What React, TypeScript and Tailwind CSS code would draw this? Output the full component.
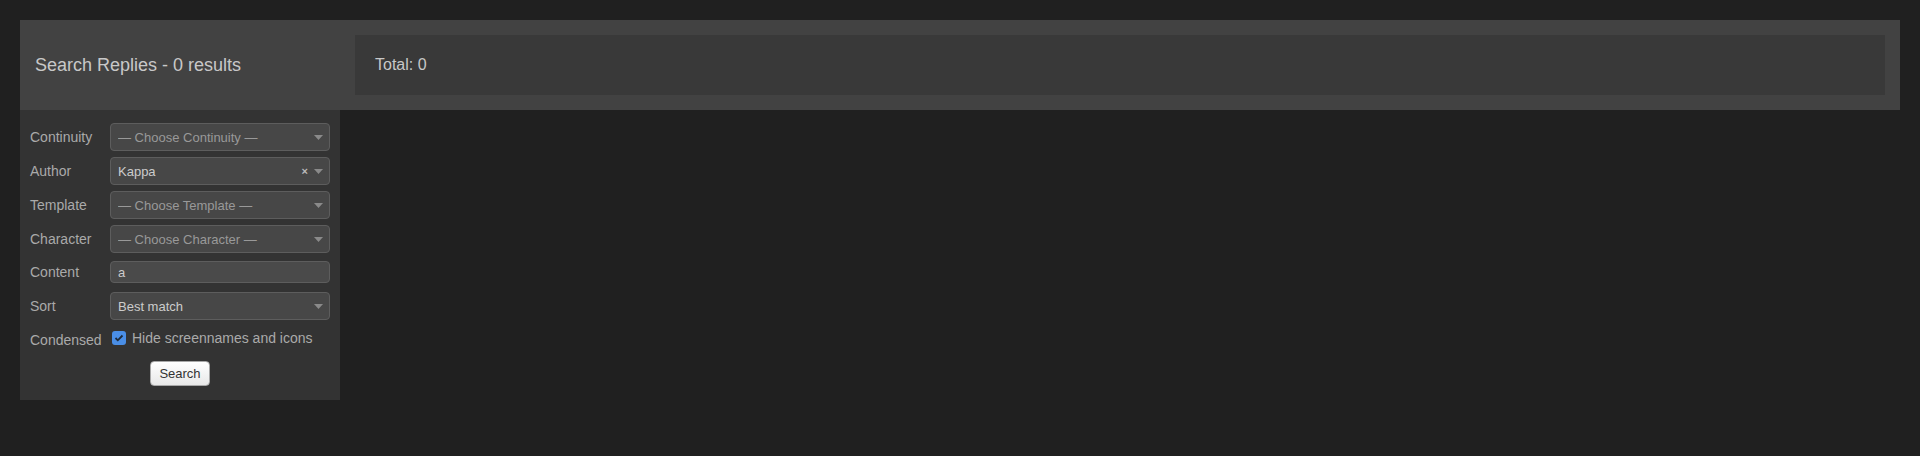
import React from 'react';

function Caret() {
    return (
        <svg width="9" height="5" viewBox="0 0 9 5" className="shrink-0">
            <path d="M0 0h9L4.5 5z" fill="#8a8a8a" />
        </svg>
    );
}

function SelectBox({ text, placeholder, clear }: { text: string; placeholder?: boolean; clear?: boolean }) {
    return (
        <div className="flex h-[28px] w-[220px] items-center rounded-[4px] border border-[#5d5d5d] bg-[#474747] pl-[7px] pr-[6px]">
            <span className={`flex-1 truncate pt-[2px] text-[13px] ${placeholder ? 'text-[#999999]' : 'text-[#cccccc]'}`}>{text}</span>
            {clear && <span className="mr-[6px] text-[11px] font-bold leading-none text-[#bbbbbb]">×</span>}
            <Caret />
        </div>
    );
}

function Row({ label, children, className }: { label: string; children: React.ReactNode; className?: string }) {
    return (
        <div className={`flex items-center ${className ?? ''}`}>
            <div className="w-[80px] text-[14px] text-[#aaaaaa]">{label}</div>
            {children}
        </div>
    );
}

export default function App() {
    return (
        <div className="min-h-[456px] bg-[#202020] px-5 pt-5" style={{ fontFamily: '"Liberation Sans", Arial, sans-serif' }}>
            {/* Header */}
            <div className="flex h-[90px] items-stretch bg-[#424242] p-[15px]">
                <div className="flex w-[320px] items-center text-[18px] text-[#c8c8c8]">Search Replies - 0 results</div>
                <div className="flex flex-1 items-center bg-[#393939] pl-5 text-[16px] text-[#c8c8c8]">Total: 0</div>
            </div>

            {/* Search form */}
            <div className="w-[320px] bg-[#333333] pb-[14px] pl-[10px] pr-[10px] pt-[13px]">
                <div className="flex flex-col gap-[6px]">
                    <Row label="Continuity">
                        <SelectBox text="— Choose Continuity —" placeholder />
                    </Row>
                    <Row label="Author">
                        <SelectBox text="Kappa" clear />
                    </Row>
                    <Row label="Template">
                        <SelectBox text="— Choose Template —" placeholder />
                    </Row>
                    <Row label="Character">
                        <SelectBox text="— Choose Character —" placeholder />
                    </Row>
                </div>
                <Row label="Content" className="mt-[8px]">
                    <div className="flex h-[22px] w-[220px] items-center rounded-[4px] border border-[#5d5d5d] bg-[#4a4a4a] px-[7px] pt-[1px] text-[13px] text-[#cccccc]">a</div>
                </Row>
                <Row label="Sort" className="mt-[9px]">
                    <SelectBox text="Best match" />
                </Row>
                <Row label="Condensed" className="mt-[10px] items-start">
                    <div className="flex items-start gap-[6px]">
                        <div className="mt-[1px] ml-[2px] flex h-[14px] w-[14px] items-center justify-center rounded-[3px] bg-[#4a8ee6]">
                            <svg width="10" height="8" viewBox="0 0 10 8">
                                <path d="M1.5 4l2.3 2.3L8.5 1.5" stroke="#1d2a3a" strokeWidth="1.8" fill="none" />
                            </svg>
                        </div>
                        <span className="text-[14px] leading-[16px] text-[#aaaaaa]">Hide screennames and icons</span>
                    </div>
                </Row>
                <div className="mt-[10px] flex justify-center">
                    <button className="h-[25px] w-[60px] rounded-[4px] border border-[#a8a8a8] bg-gradient-to-b from-white to-[#e8e8e8] text-[13px] text-[#333333]">Search</button>
                </div>
            </div>
        </div>
    );
}
